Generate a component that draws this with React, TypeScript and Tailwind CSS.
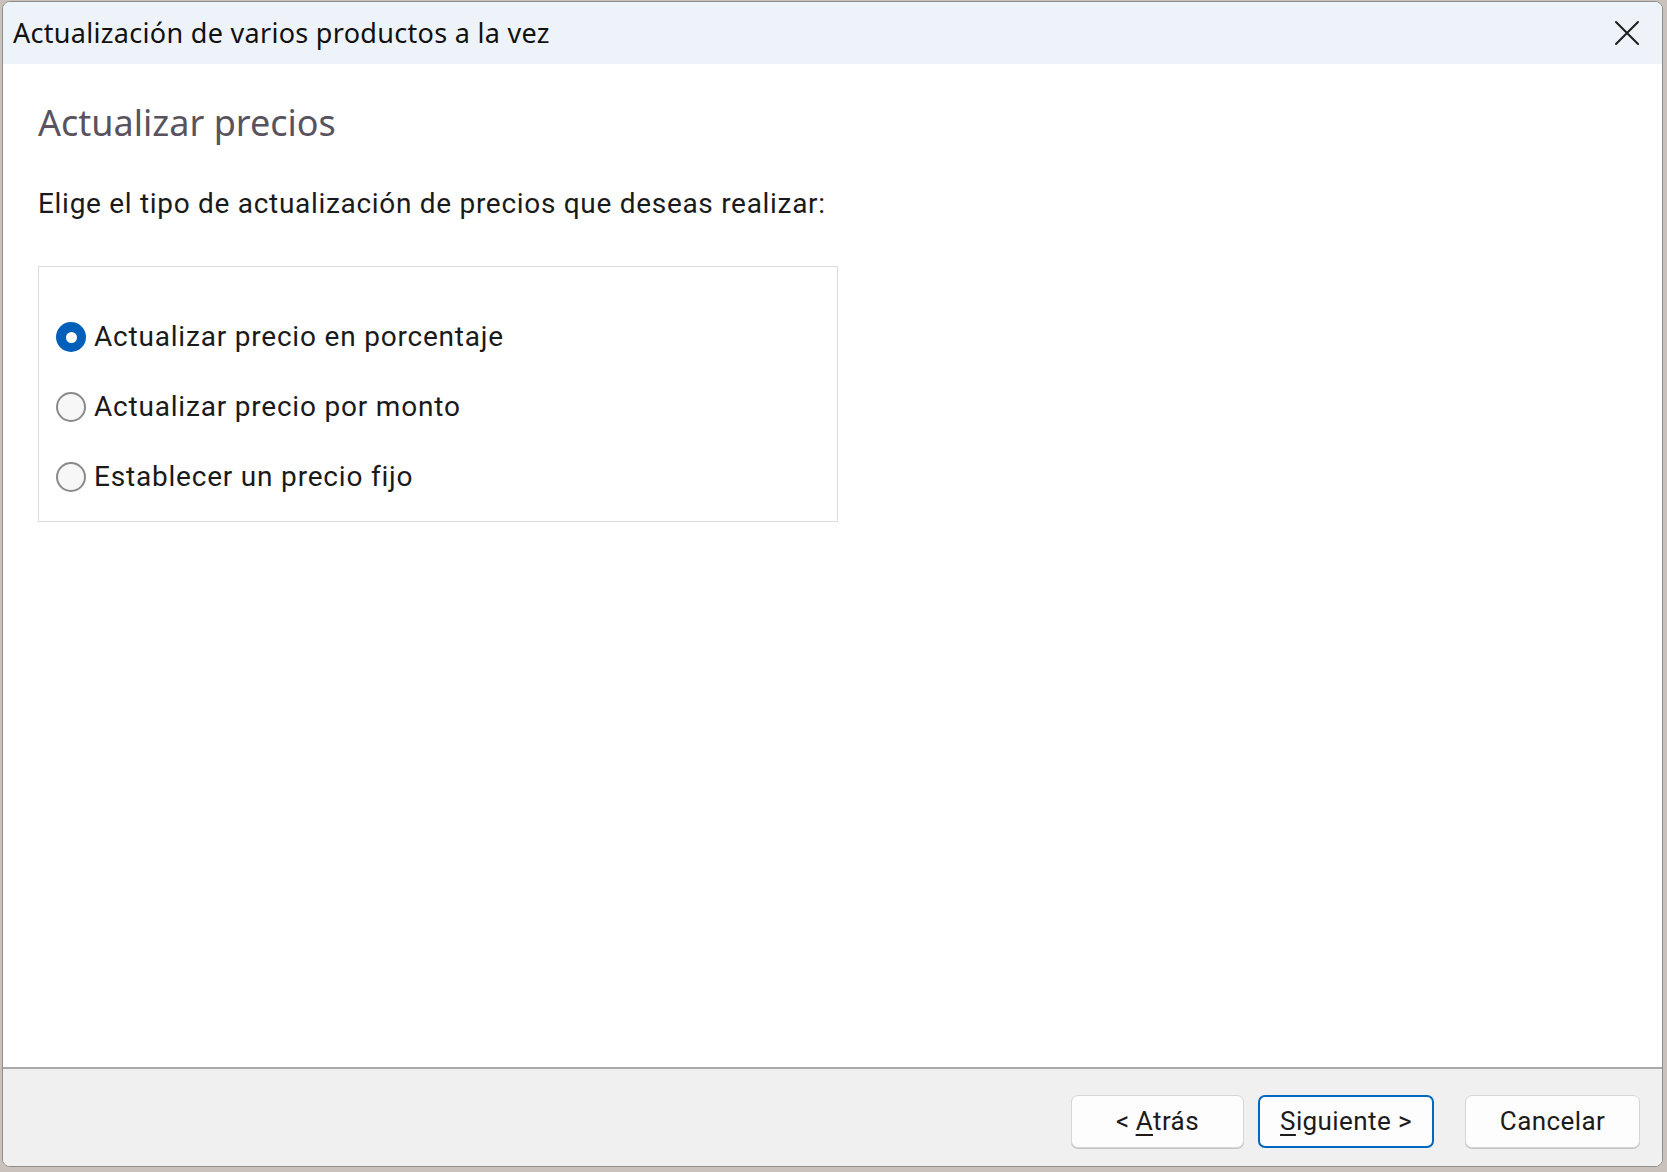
import React from 'react';

const options = [
  { id: 'pct', label: 'Actualizar precio en porcentaje', checked: true },
  { id: 'amt', label: 'Actualizar precio por monto', checked: false },
  { id: 'fix', label: 'Establecer un precio fijo', checked: false },
];

function Radio({ checked }: { checked: boolean }) {
  if (checked) {
    return (
      <span className="w-[30px] h-[30px] rounded-full bg-[#005fb8] flex items-center justify-center shrink-0">
        <span className="w-[11px] h-[11px] rounded-full bg-white" />
      </span>
    );
  }
  return <span className="w-[30px] h-[30px] rounded-full border-2 border-[#8a8a8a] bg-[#f7f7f7] shrink-0" />;
}

function WizardButton({ children, primary = false, className = '' }: { children: React.ReactNode; primary?: boolean; className?: string }) {
  return (
    <button
      className={`h-[53px] rounded-[7px] bg-[#fdfdfd] text-[26px] tracking-[0.4px] text-[#1b1b1b] flex items-center justify-center ${
        primary ? 'border-2 border-[#0067c0]' : 'border border-[#d6d6d6] shadow-[0_1px_0_#c4c4c4]'
      } ${className}`}
    >
      {children}
    </button>
  );
}

export default function App() {
  return (
    <div className="w-[1667px] h-[1172px] bg-[#c9c2bb] pt-[1px] pl-[2px] pr-[4px] pb-[5px] flex font-['Roboto',sans-serif]">
      <div className="flex-1 flex flex-col border border-[#8e8e8e] rounded-[8px] overflow-hidden bg-white">
        {/* Title bar */}
        <div className="h-[62px] bg-[#eef3f9] flex items-center justify-between pl-[10px] pr-[22px] shrink-0">
          <span className="text-[27px] tracking-[0.3px] text-[#111] font-['Noto_Sans',sans-serif]">Actualización de varios productos a la vez</span>
          <svg width="26" height="26" viewBox="0 0 26 26" className="text-[#1c1c1c]">
            <path d="M2 2 L24 24 M24 2 L2 24" stroke="currentColor" strokeWidth="2" strokeLinecap="round" />
          </svg>
        </div>

        {/* Body */}
        <div className="flex-1 px-[35px] pt-[36px]">
          <h1 className="text-[36px] leading-[46px] text-[#58535f] font-['Noto_Sans',sans-serif]">Actualizar precios</h1>
          <p className="mt-[40px] text-[28px] tracking-[0.7px] leading-[36px] text-[#1a1a1a]">
            Elige el tipo de actualización de precios que deseas realizar:
          </p>
          <div className="mt-[44px] w-[800px] h-[256px] border border-[#dcdcdc] pt-[35px] pl-[17px]">
            {options.map((o) => (
              <label key={o.id} className="h-[70px] flex items-center gap-[8px]">
                <Radio checked={o.checked} />
                <span className="text-[28px] tracking-[0.8px] text-[#1a1a1a]">{o.label}</span>
              </label>
            ))}
          </div>
        </div>

        {/* Footer */}
        <div className="h-[99px] shrink-0 border-t-2 border-[#a9a9a9] bg-[#f0f0f0] flex justify-end items-start pt-[26px] pr-[22px]">
          <WizardButton className="w-[173px]">
            &lt; <span className="underline underline-offset-4 ml-[6px]">A</span>trás
          </WizardButton>
          <WizardButton primary className="w-[176px] ml-[14px]">
            <span className="underline underline-offset-4">S</span>iguiente &gt;
          </WizardButton>
          <WizardButton className="w-[175px] ml-[31px]">Cancelar</WizardButton>
        </div>
      </div>
    </div>
  );
}
